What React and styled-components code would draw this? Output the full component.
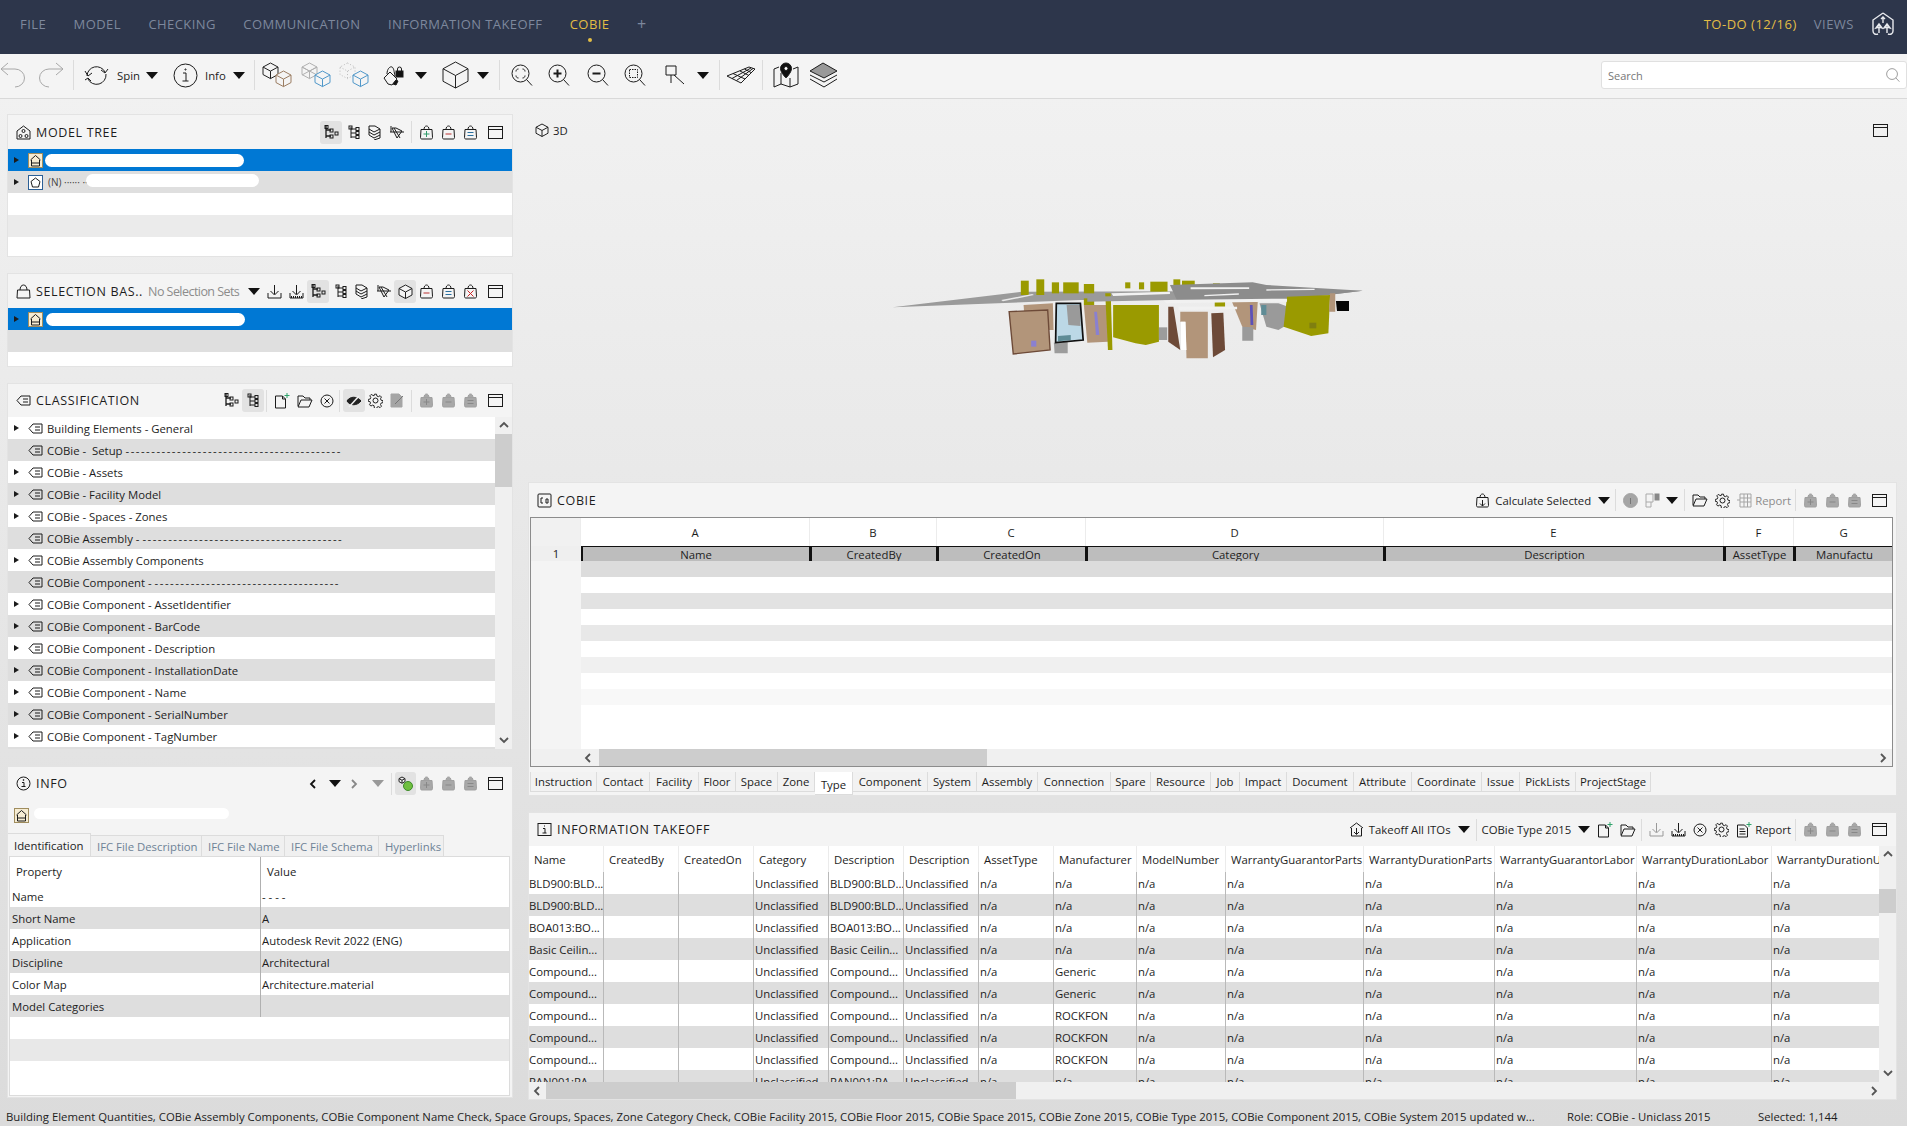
import React from "react";
import styled, { createGlobalStyle } from "styled-components";

const GlobalStyle = createGlobalStyle`
  html, body { margin: 0; padding: 0; height: 100%; }
  body { font-family: "Open Sans", "Noto Sans", sans-serif; font-size: 11.35px; color: #1d1d1d; overflow: hidden; }
  * { box-sizing: border-box; }
`;

const NAV = ["FILE", "MODEL", "CHECKING", "COMMUNICATION", "INFORMATION TAKEOFF", "COBIE"];
const CLASSES = [
  ["Building Elements - General", 1],
  ["COBie -  Setup ------------------------------------------", 0],
  ["COBie - Assets", 1],
  ["COBie - Facility Model", 1],
  ["COBie - Spaces - Zones", 1],
  ["COBie Assembly - ---------------------------------------", 0],
  ["COBie Assembly Components", 1],
  ["COBie Component - ------------------------------------", 0],
  ["COBie Component - AssetIdentifier", 1],
  ["COBie Component - BarCode", 1],
  ["COBie Component - Description", 1],
  ["COBie Component - InstallationDate", 1],
  ["COBie Component - Name", 1],
  ["COBie Component - SerialNumber", 1],
  ["COBie Component - TagNumber", 1],
  ["", 0],
];
const PROPS = [
  ["Name", ""],
  ["Short Name", "A"],
  ["Application", "Autodesk Revit 2022 (ENG)"],
  ["Discipline", "Architectural"],
  ["Color Map", "Architecture.material"],
  ["Model Categories", ""],
  ["", ""],
  ["", ""],
];
const INFO_TABS = [["Identification", 83], ["IFC File Description", 112], ["IFC File Name", 84], ["IFC File Schema", 95], ["Hyperlinks", 66]];
const SHEET_COLS = "50px 229px 127px 149px 298px 340px 70px 100px";
const SHEET = [["A", "Name"], ["B", "CreatedBy"], ["C", "CreatedOn"], ["D", "Category"], ["E", "Description"], ["F", "AssetType"], ["G", "Manufactu"]];
const SHEET_TABS = [
  ["Instruction", 67], ["Contact", 53], ["Facility", 49], ["Floor", 37], ["Space", 42], ["Zone", 37], ["Type", 38],
  ["Component", 75], ["System", 49], ["Assembly", 61], ["Connection", 73], ["Spare", 40], ["Resource", 60], ["Job", 29],
  ["Impact", 47], ["Document", 67], ["Attribute", 58], ["Coordinate", 70], ["Issue", 38], ["PickLists", 56], ["ProjectStage", 75],
];
const TAKEOFF_COLS = "75px 75px 75px 75px 75px 75px 75px 83px 89px 138px 131px 142px 135px 110px";
const TAKEOFF_HEAD = ["Name", "CreatedBy", "CreatedOn", "Category", "Description", "Description", "AssetType", "Manufacturer", "ModelNumber", "WarrantyGuarantorParts", "WarrantyDurationParts", "WarrantyGuarantorLabor", "WarrantyDurationLabor", "WarrantyDurationUnit"];
const TAKEOFF_ROWS = [
  ["BLD900:BLD...", "n/a"], ["BLD900:BLD...", "n/a"], ["BOA013:BO...", "n/a"], ["Basic Ceilin...", "n/a"],
  ["Compound...", "Generic"], ["Compound...", "Generic"], ["Compound...", "ROCKFON"], ["Compound...", "ROCKFON"], ["Compound...", "ROCKFON"], ["PAN001:PA...", "n/a"],
];

const Page = styled.div`
  width: 1907px;
  height: 1126px;
  display: flex;
  flex-direction: column;
  background: linear-gradient(#f3f3f3, #dbdbdb);
  overflow: hidden;
`;

const TopBar = styled.header`
  height: 54px;
  flex: none;
  background: #2d364b;
  display: flex;
  align-items: center;
  padding: 0 12px 6px 20px;
  font-size: 13px;
  letter-spacing: 0.5px;
`;
const NavList = styled.nav`
  display: flex;
  gap: 27.5px;
  align-items: center;
  letter-spacing: 0.42px;
`;
const NavItem = styled.span`
  position: relative;
  color: ${(p) => (p.$active ? "#e2bd45" : "#7d889d")};
  ${(p) => p.$active && `
    &::after {
      content: "";
      position: absolute;
      left: 50%;
      top: 23px;
      width: 4px;
      height: 4px;
      margin-left: -2px;
      border-radius: 50%;
      background: #e2bd45;
    }
  `}
`;
const PlusTab = styled.span`
  color: #7d889d;
  font-size: 16px;
  line-height: 1;
`;
const TopRight = styled.div`
  margin-left: auto;
  display: flex;
  align-items: center;
  gap: 17px;
  color: #7d889d;
`;
const Todo = styled.span`
  color: #e2bd45;
`;

const Toolbar = styled.div`
  height: 45px;
  flex: none;
  background: #f4f4f4;
  border-bottom: 1px solid #d9d9d9;
  display: flex;
  align-items: center;
  padding-bottom: 2px;
`;
const ToolSep = styled.i`
  width: 1px;
  height: 30px;
  background: #dcdcdc;
  margin-left: ${(p) => p.$ml || 0}px;
`;
const ToolText = styled.span`
  margin-left: ${(p) => p.$ml || 0}px;
`;
const Search = styled.div`
  margin-left: auto;
  width: 306px;
  height: 28px;
  background: #fff;
  border: 1px solid #e0e0e0;
  border-radius: 3px;
  display: flex;
  align-items: center;
  justify-content: space-between;
  padding: 0 6px 0 6px;
  color: #777;
  font-size: 11px;
`;

const Glyph = styled.svg`
  display: block;
  flex: none;
  fill: none;
  stroke: ${(p) => p.$color || "#1b1b1b"};
  stroke-width: ${(p) => p.$sw || 1};
  margin-left: ${(p) => p.$ml || 0}px;
`;
const Caret = styled.i`
  flex: none;
  width: 0;
  height: 0;
  border-left: 6px solid transparent;
  border-right: 6px solid transparent;
  border-top: 7px solid ${(p) => p.$color || "#111"};
  margin-left: ${(p) => p.$ml || 0}px;
`;

function Icon({ size = 16, h, vb, children, ...rest }) {
  return (
    <Glyph width={size} height={h || size} viewBox={vb || `0 0 ${size} ${h || size}`} {...rest}>
      {children}
    </Glyph>
  );
}

const Undo = (p) => <Icon size={26} {...p}><path d="M8 1 1 7l7 6M1 7h14a9.500 9 0 0 1 0 18" /></Icon>;
const Redo = (p) => <Icon size={26} {...p}><path d="m18 1 7 6-7 6M25 7H11a9.500 9 0 0 0 0 18" /></Icon>;
const Spin = (p) => <Icon size={25} h={20} {...p}><path d="M3 11A9.500 9.500 0 0 1 21 7M22 9a9.500 9.500 0 0 1-18 5" /><path d="m1 6 3 5 4-3M17 5l4 3 3-4M1 15l3-2 3 3" /></Icon>;
const InfoBig = (p) => <Icon size={25} {...p}><circle cx="12.500" cy="12.500" r="11.500" /><path d="M10 10h3v8M9.500 18h6" /><circle cx="12.500" cy="6.500" r=".6" /></Icon>;
const Cube = ({ x = 0, y = 0, s = 12, c = "#222" }) => (
  <g stroke={c} fill="#f4f4f4" transform={`translate(${x} ${y})`}>
    <path d={`M${s / 2} 0 ${s} ${s * 0.27}v${s * 0.5}L${s / 2} ${s * 1.04} 0 ${s * 0.77}v-${s * 0.5}Z`} />
    <path fill="none" d={`M0 ${s * 0.27}l${s / 2} ${s * 0.27} ${s / 2}-${s * 0.27}M${s / 2} ${s * 0.54}v${s / 2}`} />
  </g>
);
const Cubes1 = (p) => <Icon size={30} h={26} {...p}><Cube x={1} y={1} s={15} /><Cube x={14} y={9} s={15} c="#9b7d62" /></Icon>;
const Cubes2 = (p) => <Icon size={30} h={26} {...p}><Cube x={1} y={1} s={15} c="#b0b0b0" /><path stroke="#b0b0b0" d="m1 5 15 8M16 5 1 13" /><Cube x={14} y={9} s={15} c="#4f97c9" /></Icon>;
const Cubes3 = (p) => <Icon size={30} h={26} {...p}><g strokeDasharray="1 2"><Cube x={1} y={1} s={15} c="#bbb" /></g><Cube x={14} y={9} s={15} c="#4f97c9" /></Icon>;
const Hand = (p) => <Icon size={21} {...p}><path d="M1 13 7 7l7 7-5 6-4-1Z" /><path d="M4 9c0-5 3-8 5-7s2 5 3 9" /><path fill="#111" d="M10 19l3-4 2 1-2 4Z" /><rect x="13" y="6" width="7" height="6" fill="#111" /><path d="M14.500 6V4a2 2 0 0 1 4 0v2" /></Icon>;
const BigCube = (p) => <Icon size={28} {...p}><Cube x={1} y={1} s={25} /></Icon>;
const Zoom = ({ kind, ...p }) => (
  <Icon size={22} {...p}>
    <circle cx="9.500" cy="9.500" r="8.500" /><path d="m15.500 15.500 5.500 6" />
    {kind === "plus" && <path strokeWidth="2" d="M5.500 9.500h8M9.500 5.500v8" />}
    {kind === "minus" && <path strokeWidth="2" d="M5.500 9.500h8" />}
    {kind === "all" && <path d="M5 7.500c0-1.500 1-2.500 2.500-2.500M11.500 5C13 5 14 6 14 7.500M14 11.500c0 1.500-1 2.500-2.500 2.500M7.500 14C6 14 5 13 5 11.500" />}
    {kind === "box" && <rect x="5.500" y="5.500" width="8" height="8" strokeDasharray="1.500 1" />}
  </Icon>
);
const Section = (p) => <Icon size={20} {...p}><path d="M1 1h10v9H1ZM9 10l10 9M6 10v8" /></Icon>;
const Mesh = (p) => <Icon size={30} h={18} {...p}><path d="M1 10 23 1l6 2-14 14ZM6 12.500 25 2M10.500 14.500 27 2.500M7 7.500 19 13M14 5l9 4.500M18.500 3l6.500 3.500" /></Icon>;
const MapPin = (p) => <Icon size={26} {...p}><path d="M1 7v18l7-3 9 3 8-3V5l-5 2M1 7l5-2M8 11v11M17 16v9" /><path fill="#111" d="M13 1a5.500 5.500 0 0 1 5.500 5.500c0 4-5.500 9.500-5.500 9.500S7.500 10.500 7.500 6.500A5.500 5.500 0 0 1 13 1Z" /><circle cx="13" cy="6.500" r="2" fill="#fff" /></Icon>;
const Layers = (p) => <Icon size={29} h={26} {...p}><path fill="#999" d="M14 1 28 9 15 16 1 9Z" /><path d="m1 13 14 7 13-7M1 17l14 8 13-8" /></Icon>;

const Max = (p) => <Icon size={15} h={13} {...p}><rect x=".5" y=".5" width="14" height="12" /><path d="M.5 3.500h14" /></Icon>;
const Basket = ({ mark, tone = "#1b1b1b", dim, ...p }) => (
  <Icon size={15} {...p}>
    <path fill={dim ? "#a8a8a8" : "none"} stroke={dim ? "#a0a0a0" : "#1b1b1b"} d="M2 4.500h11l.5 8c0 1-.5 1.500-1.500 1.500H3c-1 0-1.500-.5-1.500-1.500ZM5 4.500C5 2.500 6 1 7.500 1S10 2.500 10 4.500" />
    {mark === "plus" && <path stroke={dim ? "#888" : tone} d="M4.500 9h6M7.500 6v6" />}
    {mark === "minus" && <path stroke={dim ? "#888" : tone} d="M4.500 9h6" />}
    {mark === "equal" && <path stroke={dim ? "#888" : tone} d="M4.500 7.500h6M4.500 10.500h6" />}
    {mark === "x" && <path stroke={tone} d="m4.500 6.500 6 6M10.500 6.500l-6 6" />}
    {mark === "down" && <path d="M7.500 7v6M5 10.500l2.500 2.500 2.500-2.500" />}
  </Icon>
);
const TreeA = (p) => <Icon size={15} {...p}><path strokeWidth="1.300" d="M2 1v12M2 5h5M2 11h5" /><rect x="1" y="0.500" width="3" height="3" /><rect x="6" y="4" width="3" height="3" /><rect x="6" y="10" width="3" height="3" /><rect x="11" y="7" width="3" height="3" /></Icon>;
const TreeB = (p) => <Icon size={12} h={15} {...p}><path d="M3 2v11M3 4h5M3 8h5M3 12h5" /><rect x="1" y="1" width="3" height="3" /><rect x="8" y="2.500" width="3" height="3" /><rect x="8" y="6.500" width="3" height="3" /><rect x="8" y="10.500" width="3" height="3" /></Icon>;
const TreeC = (p) => <Icon size={15} {...p}><path d="M2 1h6l5 3-6 3-5-3ZM2 4v3l5 3 6-3M2 7v3l5 3 6-3V4M13 10v3l-6 2" /></Icon>;
const TreeD = (p) => <Icon size={15} {...p}><path d="M2 1v6M1 7h14M3 3h4l6 3-5 7-3-6ZM5 3l6 10" /></Icon>;
const Download = ({ dots, ...p }) => <Icon size={15} {...p}><path d="M7.500 1v9M3.500 7l4 4 4-4M1 9v5h13V9" />{dots && <path strokeWidth="2" strokeDasharray="1 1" d="M2 13h11" />}</Icon>;
const CubeOne = (p) => <Icon size={15} {...p}><Cube x={1} y={1} s={13} /></Icon>;
const XCircle = (p) => <Icon size={14} {...p}><circle cx="7" cy="7" r="6" /><path d="m4.500 4.500 5 5M9.500 4.500l-5 5" /></Icon>;
const Gear = (p) => <Icon size={15} {...p}><path d="M6.500 1h2l.5 2 1.500.6 1.800-1 1.400 1.400-1 1.800.6 1.500 2 .5v2l-2 .5-.6 1.500 1 1.800-1.400 1.400-1.800-1-1.500.6-.5 2h-2L6 13l-1.500-.6-1.800 1-1.400-1.400 1-1.800L1.700 8.700l-1.700-.2v-2l2-.5.6-1.500-1-1.800 1.400-1.400 1.800 1L6 2.700Z" transform="translate(.3 .2) scale(.96)" /><circle cx="7.500" cy="7.500" r="2.500" /></Icon>;
const NewDoc = (p) => <Icon size={16} {...p}><path d="M1.500 3h7l3 3v9h-10ZM8.500 3v3h3" /><path stroke="#2fa36b" d="M13 0v5M10.500 2.500h5" /></Icon>;
const DocLines = (p) => <Icon size={16} {...p}><path d="M1.500 3h7l3 3v9h-10ZM3.500 7h5M3.500 9.500h6M3.500 12h6" /><path stroke="#2fa36b" d="M13 0v5M10.500 2.500h5" /></Icon>;
const Folder = (p) => <Icon size={16} h={14} {...p}><path d="M1 12V2h5l2 2h5v2M1 13l3-7h11l-3 7Z" /></Icon>;
const Eye = (p) => <Icon size={16} {...p}><path fill="#222" d="M1 8c3-5 10-5 14 0-4 5-11 5-14 0Z" /><path stroke="#f0f0f0" d="m3 14 10-11" strokeWidth="1.500" /></Icon>;
const GreyDoc = (p) => <Icon size={15} {...p}><path fill="#a5a5a5" stroke="#a5a5a5" d="M1 1h8l3 3v10H1Z" /><path stroke="#777" d="m5 11 8-8" /></Icon>;
const Tag = (p) => <Icon size={15} h={11} {...p}><path d="M1 5.500 5 1h9v9H5ZM7 4h5M7 7h5" /></Icon>;
const House = (p) => <Icon size={13} {...p}><path d="M1.500 6 6.500 1.500l5 4.500M2.500 6v6h8V6M2.500 9h8" /></Icon>;
const Chev = ({ dir, tone = "#555", ...p }) => {
  const d = { left: "M6 1 2 5l4 4", right: "M2 1l4 4-4 4", up: "M1 6l4-4 4 4", down: "M1 3l4 4 4-4" }[dir];
  return <Icon size={10} {...p}><path d={d} strokeWidth="1.800" stroke={tone} /></Icon>;
};

const Main = styled.main`
  flex: 1;
  min-height: 0;
  display: grid;
  grid-template-columns: 506px 1369px;
  grid-template-rows: auto 1fr;
  column-gap: 15px;
  padding: 15px 0 0 7px;
`;
const Column = styled.div`
  display: flex;
  flex-direction: column;
  gap: 16px;
`;
const Panel = styled.section`
  height: ${(p) => p.$h}px;
  background: #f4f4f4;
  border: 1px solid #e3e3e3;
  display: flex;
  flex-direction: column;
  overflow: hidden;
  flex: none;
`;
const PanelHead = styled.div`
  height: ${(p) => p.$h || 34}px;
  flex: none;
  display: flex;
  align-items: center;
  gap: 5px;
  padding: 0 9px 0 8px;
  font-size: 12.5px;
`;
const Title = styled.span`
  letter-spacing: 0.65px;
  white-space: nowrap;
`;
const HeadTools = styled.div`
  margin-left: auto;
  display: flex;
  align-items: center;
  gap: 7px;
  font-size: 11.35px;
`;
const Hl = styled.span`
  display: flex;
  align-items: center;
  justify-content: center;
  width: ${(p) => p.$w || 22}px;
  height: 23px;
  margin: 0 -4px;
  background: #e2e2e2;
  border-radius: 3px;
`;
const Sep = styled.i`
  width: 1px;
  height: 22px;
  background: #dcdcdc;
  margin-left: ${(p) => p.$ml || 0}px;
`;
const Muted = styled.span`
  color: ${(p) => p.$color || "#8c8c8c"};
  white-space: nowrap;
  margin-left: ${(p) => p.$ml || 0}px;
  letter-spacing: ${(p) => p.$ls || 0}px;
`;

const Stripe = styled.div`
  height: ${(p) => p.$h || 22}px;
  flex: none;
  background: ${(p) => p.$bg || "#fff"};
  display: flex;
  align-items: center;
  position: relative;
  padding-left: ${(p) => p.$pl || 0}px;
  white-space: nowrap;
  overflow: hidden;
`;
const Arrow = styled.i`
  width: 0;
  height: 0;
  flex: none;
  border-top: 3.500px solid transparent;
  border-bottom: 3.500px solid transparent;
  border-left: 5px solid ${(p) => (p.$hide ? "transparent" : "#1b1b1b")};
  margin-right: 9px;
`;
const NodeBadge = styled.span`
  width: 15px;
  height: 15px;
  flex: none;
  display: flex;
  align-items: center;
  justify-content: center;
  background: ${(p) => p.$bg || "#f6ecd2"};
  border: 1px solid ${(p) => p.$line || "#a08d5e"};
`;
const Blot = styled.span`
  position: absolute;
  left: ${(p) => p.$x}px;
  top: ${(p) => p.$y}px;
  width: ${(p) => p.$w}px;
  height: ${(p) => p.$hh}px;
  background: #fff;
  border-radius: 7px;
`;
const Peek = styled.span`
  margin-left: ${(p) => p.$ml || 5}px;
  color: ${(p) => p.$color || "#444"};
  font-size: 10px;
`;
const Fill = styled.div`
  flex: 1;
  background: ${(p) => p.$bg || "#fff"};
`;

const ListWrap = styled.div`
  flex: 1;
  min-height: 0;
  display: flex;
`;
const ListRows = styled.div`
  flex: 1;
  display: flex;
  flex-direction: column;
  background: #fff;
  overflow: hidden;
`;
const RowLabel = styled.span`
  margin-left: 4px;
  white-space: pre;
`;
const Dashes = styled.span`
  letter-spacing: 1.5px;
`;
const VBar = styled.div`
  width: 17px;
  flex: none;
  background: #f0f0f0;
  display: flex;
  flex-direction: column;
  align-items: center;
  justify-content: space-between;
  padding: 4px 0;
  position: relative;
`;
const VThumb = styled.div`
  position: absolute;
  left: 0;
  right: 0;
  top: ${(p) => p.$top}px;
  height: ${(p) => p.$h}px;
  background: #cdcdcd;
`;

const ObjectRow = styled.div`
  height: 33px;
  flex: none;
  position: relative;
  display: flex;
  align-items: center;
  padding: 0 0 2px 6px;
`;
const TabRow = styled.div`
  height: 23px;
  flex: none;
  display: flex;
  align-items: flex-end;
`;
const InfoTab = styled.span`
  width: ${(p) => p.$w}px;
  height: ${(p) => (p.$active ? 23 : 21)}px;
  padding-left: 6px;
  border: 1px solid #dcdcdc;
  border-bottom: 0;
  border-left-width: ${(p) => (p.$first ? 0 : 1)}px;
  margin-left: ${(p) => (p.$first ? 0 : -1)}px;
  color: ${(p) => (p.$active ? "#222" : "#6d8296")};
  display: flex;
  align-items: center;
  white-space: nowrap;
  background: ${(p) => (p.$active ? "#f4f4f4" : "#f0f0f0")};
`;
const PropTable = styled.div`
  flex: 1;
  margin: 0 0 1px 1px;
  width: 501px;
  background: #fff;
  border: 1px solid #dcdcdc;
  display: flex;
  flex-direction: column;
`;
const PropGrid = styled.div`
  display: grid;
  flex: none;
  grid-template-columns: 250px 1fr;
  height: ${(p) => p.$h || 22}px;
  background: ${(p) => p.$bg || "#fff"};
  align-items: center;
`;
const PropCell = styled.span`
  padding-left: ${(p) => p.$pl || 1}px;
  height: 100%;
  display: flex;
  align-items: center;
  ${(p) => p.$line && `border-left: 1px solid #b0b0b0;`}
`;

const Viewport = styled.div`
  height: 352px;
  flex: none;
  display: flex;
  flex-direction: column;
`;
const ViewHead = styled.div`
  height: 32px;
  flex: none;
  display: flex;
  align-items: center;
  gap: 4px;
  padding: 0 9px 0 6px;
`;
const Scene = styled.svg`
  display: block;
  flex: none;
  margin: 104px 0 0 332px;
`;

const Sheet = styled.div`
  height: 250px;
  margin: 0 3px 0 1px;
  flex: none;
  border: 1px solid #8c8c8c;
  background: #fff;
  display: flex;
  flex-direction: column;
  overflow: hidden;
`;
const SheetRow = styled.div`
  display: grid;
  grid-template-columns: ${SHEET_COLS};
  flex: none;
  height: ${(p) => p.$h}px;
  margin-right: -4px;
`;
const LetterCell = styled.div`
  display: flex;
  align-items: center;
  justify-content: center;
  padding-top: 1px;
  background: ${(p) => (p.$corner ? "#f1f1f1" : "#fff")};
  border-right: 1px solid #ececec;
`;
const NameCell = styled.div`
  display: flex;
  align-items: center;
  justify-content: center;
  background: #bdbdbd;
  border: 1px solid #111;
  border-left-width: 2px;
  overflow: hidden;
  white-space: nowrap;
`;
const RowNum = styled.div`
  display: flex;
  align-items: center;
  justify-content: center;
  background: #efefef;
  border-bottom: 2px solid #9a9a9a;
`;
const SheetBody = styled.div`
  flex: 1;
  display: flex;
  min-height: 0;
`;
const Gutter = styled.div`
  width: 50px;
  flex: none;
  background: #f4f4f4;
`;
const HBar = styled.div`
  height: 17px;
  flex: none;
  background: #f0f0f0;
  display: flex;
  align-items: center;
  padding-left: ${(p) => p.$pl || 0}px;
  position: relative;
`;
const HThumb = styled.div`
  height: 100%;
  width: ${(p) => p.$w}px;
  margin-left: ${(p) => p.$ml}px;
  background: #cdcdcd;
`;
const BarEnd = styled.span`
  margin-left: auto;
  margin-right: ${(p) => p.$mr || 3}px;
`;
const SheetTabs = styled.div`
  display: flex;
  height: 24px;
  margin: 5px 0 0 1px;
  flex: none;
  align-items: flex-start;
`;
const SheetTab = styled.span`
  width: ${(p) => p.$w}px;
  height: ${(p) => (p.$active ? 23 : 20)}px;
  padding-top: ${(p) => (p.$active ? 3 : 0)}px;
  display: flex;
  align-items: center;
  justify-content: center;
  background: ${(p) => (p.$active ? "#fff" : "#f2f2f2")};
  border-right: 1px solid #dcdcdc;
  border-bottom: 1px solid #dcdcdc;
  white-space: nowrap;
  flex: none;
  &:first-child { border-left: 1px solid #dcdcdc; }
`;

const TakeoffWrap = styled.div`
  height: 236px;
  flex: none;
  display: flex;
  overflow: hidden;
`;
const TakeoffBody = styled.div`
  flex: 1;
  min-width: 0;
  overflow: hidden;
`;
const TakeoffRow = styled.div`
  display: grid;
  grid-template-columns: ${TAKEOFF_COLS};
  height: ${(p) => p.$h || 22}px;
  background: ${(p) => p.$bg || "#fff"};
`;
const HeadCell = styled.div`
  display: flex;
  align-items: center;
  padding-left: 5px;
  border-right: 1px solid #ebebeb;
  white-space: nowrap;
  overflow: hidden;
`;
const DataCell = styled.div`
  display: flex;
  align-items: center;
  padding-left: ${(p) => (p.$first ? 0 : 1)}px;
  border-right: 1px solid #b9b9b9;
  white-space: nowrap;
  overflow: hidden;
`;

const StatusBar = styled.footer`
  grid-column: 1 / -1;
  display: flex;
  align-items: flex-start;
  padding: 9px 0 0 0;
  margin-left: -1px;
  white-space: nowrap;
`;
const StatusMsg = styled.span`
  width: 1561px;
`;
const StatusRole = styled.span`
  width: 191px;
`;

function Scene3D() {
  const solids = [
    ["#9a9a9a", "95,172 470,125 1460,122 1240,150 640,150 400,160"],
    ["#9a9a00", "467,92 490,92 490,135 467,135"], ["#9a9a00", "512,88 535,88 535,135 512,135"], ["#9a9a00", "557,97 578,97 578,130 557,130"],
    ["#9a9a00", "590,97 635,97 635,130 590,130"], ["#9a9a00", "650,102 680,102 680,130 650,130"], ["#9a9a00", "770,97 785,97 785,115 770,115"],
    ["#9a9a00", "810,97 825,97 825,118 810,118"], ["#9a9a00", "843,95 893,95 893,125 843,125"], ["#9a9a00", "910,88 930,88 930,110 910,110"],
    ["#9a9a00", "935,92 972,92 972,112 935,112"], ["#9a9a00", "1025,100 1045,100 1045,130 1025,130"],
    ["#8c8c8c", "900,105 1140,97 1180,105 1460,122 1240,150 920,150"],
    ["#9a9a00", "650,145 680,145 680,165 650,165"], ["#9a9a00", "1030,152 1060,152 1060,170 1030,170"],
    ["#b2957a", "475,165 560,160 562,240 480,240"],
    ["#b2957a", "433,185 545,180 552,300 445,312"],
    ["#bcd8e6", "570,160 640,160 648,270 568,278"],
    ["#9a9a9a", "600,165 640,165 640,228 605,225"],
    ["#5f8c96", "575,258 612,255 612,270 575,274"],
    ["#9c9c9c", "563,278 603,275 603,310 565,310"],
    ["#b2957a", "650,165 720,165 720,275 660,278"],
    ["#8a80d0", "680,185 688,185 695,255 685,255"],
    ["#9a9a00", "735,165 868,165 868,275 830,285 800,280 735,262"],
    ["#9a9a00", "712,130 728,130 733,300 720,300"],
    ["#9c9c9c", "868,232 892,232 892,270 868,270"],
    ["#6d4a38", "895,170 910,170 930,300 895,275"],
    ["#b2957a", "930,185 1010,185 1010,325 948,325 945,215 930,215"],
    ["#fff", "932,215 945,215 948,300 932,300"],
    ["#6d4a38", "1020,190 1055,188 1060,300 1025,322"],
    ["#b2957a", "1080,155 1155,155 1150,240 1110,230"],
    ["#5c50b8", "1132,165 1140,165 1142,225 1134,225"],
    ["#9a9a9a", "1110,230 1142,232 1142,272 1110,272"],
    ["#9a9a9a", "1160,160 1215,160 1255,175 1255,215 1215,240 1180,230"],
    ["#5f8c96", "1165,165 1180,165 1180,195 1165,195"],
    ["#9a9a00", "1240,140 1365,135 1360,250 1310,258 1230,230"],
    ["#7f7f10", "1305,218 1325,218 1325,235 1305,235"],
    ["#b2957a", "1365,130 1380,130 1380,185 1362,185"],
    ["#050505", "1382,153 1420,153 1420,183 1385,183"],
    ["#e9e9e9", "410,150 500,132 505,135 415,154"],
    ["#f1f1f1", "880,150 1240,146 1240,155 890,160"],
    ["#f1f1f1", "730,130 900,125 900,132 735,138"],
    ["#f1f1f1", "925,170 1095,170 1095,178 925,180"],
    ["#f1f1f1", "960,112 1130,112 1130,117 960,118"],
    ["#f1f1f1", "1180,118 1320,116 1320,120 1180,122"],
    ["#f1f1f1", "1000,135 1100,130 1100,134 1000,139"],
    ["#9a9a9a", "660,140 900,135 900,150 660,155"],
  ];
  return (
    <Scene width="540" height="130" viewBox="0 0 1568 390" preserveAspectRatio="none">
      {solids.map(([c, pts], i) => <polygon key={i} fill={c} points={pts} />)}
      <polygon fill="none" stroke="#111" strokeWidth="5" points="570,160 640,160 648,270 568,278" />
      <polygon fill="none" stroke="#6d4a38" strokeWidth="4" points="433,185 545,180 552,300 445,312" />
      <polygon fill="#8a80d0" points="497,272 512,272 512,290 497,290" />
    </Scene>
  );
}

function CobieSheet() {
  const bands = ["#dcdcdc", "#fff", "#e2e2e2", "#fff", "#e8e8e8", "#fff", "#f0f0f0", "#fff", "#f8f8f8"];
  return (
    <Sheet>
      <SheetRow $h={28}>
        <LetterCell $corner />
        {SHEET.map(([l]) => <LetterCell key={l}>{l}</LetterCell>)}
      </SheetRow>
      <SheetRow $h={15}>
        <RowNum>1</RowNum>
        {SHEET.map(([l, n]) => <NameCell key={l}>{n}</NameCell>)}
      </SheetRow>
      <SheetBody>
        <Gutter />
        <ListRows>
          {bands.map((c, i) => <Stripe key={i} $h={16} $bg={c} />)}
        </ListRows>
      </SheetBody>
      <HBar $pl={53}>
        <Chev dir="left" />
        <HThumb $ml={5} $w={388} />
        <BarEnd><Chev dir="right" /></BarEnd>
      </HBar>
    </Sheet>
  );
}

function TreeList({ rows }) {
  return rows.map(([label, exp], i) => {
    const parts = label.match(/^(.*?)(-{5,})$/);
    return (
      <Stripe key={i} $bg={i % 2 ? "#dedede" : "#fff"} $pl={6}>
        <Arrow $hide={!exp} />
        <Tag />
        <RowLabel>
          {parts ? <>{parts[1]}<Dashes>{parts[2]}</Dashes></> : label}
        </RowLabel>
      </Stripe>
    );
  });
}

function PanelBaskets({ dim }) {
  return (
    <>
      <Basket mark="plus" tone="#2f9b6b" dim={dim} />
      <Basket mark="minus" tone="#b33" dim={dim} />
      <Basket mark="equal" tone="#2a6f9e" dim={dim} />
      <Max $ml={3} />
    </>
  );
}

export default function App() {
  return (
    <Page>
      <GlobalStyle />
      <TopBar>
        <NavList>
          {NAV.map((n) => <NavItem key={n} $active={n === "COBIE"}>{n}</NavItem>)}
          <PlusTab>+</PlusTab>
        </NavList>
        <TopRight>
          <Todo>TO-DO (12/16)</Todo>
          <span>VIEWS</span>
          <Icon size={24} $color="#e8eaee" $sw={1.4}>
            <path d="M12 1 22 8v11c0 3-3 4-5 3M12 1 2 8v11c0 3 3 4 5 3" />
            <path d="M8 21v-6l-3 1 3-4 3 4-3-1M16 21v-6l-3 1 3-4 3 4-3-1M12 5v6M10 7l2-2 2 2" />
          </Icon>
        </TopRight>
      </TopBar>

      <Toolbar>
        <Undo $color="#a8a8a8" />
        <Redo $color="#a8a8a8" $ml={12} />
        <ToolSep $ml={9} />
        <Spin $ml={10} />
        <ToolText $ml={8}>Spin</ToolText>
        <Caret $ml={6} />
        <InfoBig $ml={15} />
        <ToolText $ml={7}>Info</ToolText>
        <Caret $ml={7} />
        <ToolSep $ml={9} />
        <Cubes1 $ml={7} />
        <Cubes2 $ml={9} />
        <Cubes3 $ml={8} />
        <Hand $ml={14} />
        <Caret $ml={11} />
        <BigCube $ml={15} />
        <Caret $ml={7} />
        <ToolSep $ml={10} />
        <Zoom kind="all" $ml={11} />
        <Zoom kind="plus" $ml={15} />
        <Zoom kind="minus" $ml={17} />
        <Zoom kind="box" $ml={15} />
        <Section $ml={19} />
        <Caret $ml={12} />
        <ToolSep $ml={10} />
        <Mesh $ml={6} />
        <ToolSep $ml={6} />
        <MapPin $ml={10} />
        <Layers $ml={10} />
        <Search>
          Search
          <Zoom kind="none" size={14} vb="0 0 22 22" $color="#666" />
        </Search>
      </Toolbar>

      <Main>
        <Column>
          <Panel $h={143}>
            <PanelHead>
              <Icon size={15}><path d="M7.500 1 14 6v8H1V6Z" /><circle cx="7.500" cy="6" r="1.500" /><circle cx="4.500" cy="11" r="1.500" /><circle cx="10.500" cy="11" r="1.500" /></Icon>
              <Title>MODEL TREE</Title>
              <HeadTools>
                <Hl><TreeA /></Hl>
                <TreeB $ml={3} />
                <TreeC />
                <TreeD />
                <Sep />
                <PanelBaskets />
              </HeadTools>
            </PanelHead>
            <Stripe $bg="#0078d4" $pl={6}>
              <Arrow />
              <NodeBadge><House /></NodeBadge>
              <Peek $color="#fff">(N) ··</Peek>
              <Blot $x={37} $y={5} $w={199} $hh={13} />
            </Stripe>
            <Stripe $bg="#dfdfdf" $pl={6}>
              <Arrow />
              <NodeBadge $bg="#fff" $line="#2b5f96"><Icon size={11}><path d="M5.500 1 10 4.500 8.500 10h-6L1 4.500Z" /></Icon></NodeBadge>
              <Peek>(N) ······ ·····</Peek>
              <Blot $x={78} $y={3} $w={173} $hh={13} />
            </Stripe>
            <Stripe />
            <Stripe $bg="#ebebeb" />
            <Fill />
          </Panel>

          <Panel $h={94}>
            <PanelHead>
              <Icon size={15}><path d="M1.500 6h12l.5 8H1ZM4 6c0-3 1.500-5 3.500-5S11 3 11 6" /></Icon>
              <Title>SELECTION BAS..</Title>
              <Muted $ls={-0.55}>No Selection Sets</Muted>
              <HeadTools>
                <Caret />
                <Download />
                <Download dots />
                <Hl><TreeA /></Hl>
                <TreeB $ml={3} />
                <TreeC />
                <TreeD />
                <Hl><CubeOne /></Hl>
                <Basket mark="minus" tone="#b33" />
                <Basket mark="equal" tone="#2a6f9e" />
                <Basket mark="x" tone="#c22" />
                <Max $ml={3} />
              </HeadTools>
            </PanelHead>
            <Stripe $bg="#0078d4" $pl={6}>
              <Arrow />
              <NodeBadge><House /></NodeBadge>
              <Peek $color="#fff">(N) ··</Peek>
              <Blot $x={38} $y={5} $w={199} $hh={13} />
            </Stripe>
            <Stripe $bg="#dfdfdf" />
            <Fill />
          </Panel>

          <Panel $h={367}>
            <PanelHead $h={33}>
              <Tag />
              <Title>CLASSIFICATION</Title>
              <HeadTools>
                <TreeA />
                <Hl><TreeB /></Hl>
                <Sep $ml={-1} />
                <NewDoc />
                <Folder />
                <XCircle />
                <Sep $ml={-2} />
                <Hl><Eye /></Hl>
                <Gear />
                <GreyDoc />
                <Sep $ml={-1} />
                <PanelBaskets dim />
              </HeadTools>
            </PanelHead>
            <ListWrap>
              <ListRows><TreeList rows={CLASSES} /></ListRows>
              <VBar>
                <Chev dir="up" />
                <VThumb $top={17} $h={53} />
                <Chev dir="down" />
              </VBar>
            </ListWrap>
          </Panel>

          <Panel $h={332}>
            <PanelHead $h={33}>
              <Icon size={15}><circle cx="7.500" cy="7.500" r="6.500" /><path d="M6 6.500h2v4M5.500 10.500h4" /><circle cx="7.500" cy="4" r=".5" /></Icon>
              <Title>INFO</Title>
              <HeadTools>
                <Chev dir="left" tone="#111" />
                <Caret $ml={3} />
                <Chev dir="right" tone="#888" $ml={2} />
                <Caret $color="#999" $ml={5} />
                <Sep />
                <Hl $w={21}>
                  <Icon size={15}><Cube x={1} y={1} s={6} /><circle cx="10" cy="10" r="4.500" fill="#6fbf3f" stroke="#3d8a2a" /></Icon>
                </Hl>
                <PanelBaskets dim />
              </HeadTools>
            </PanelHead>
            <ObjectRow>
              <NodeBadge><House /></NodeBadge>
              <Peek $ml={125}>- - - - - - - - -</Peek>
              <Blot $x={26} $y={8} $w={195} $hh={11} />
            </ObjectRow>
            <TabRow>
              {INFO_TABS.map(([t, w], i) => <InfoTab key={t} $w={w} $active={i === 0} $first={i === 0}>{t}</InfoTab>)}
            </TabRow>
            <PropTable>
              <PropGrid $h={28}>
                <PropCell $pl={6}>Property</PropCell>
                <PropCell $pl={6} $line>Value</PropCell>
              </PropGrid>
              {PROPS.map(([k, v], i) => (
                <PropGrid key={i} $bg={i % 2 ? (i > 5 ? "#e8e8e8" : "#dedede") : "#fff"}>
                  <PropCell $pl={2}>{k}</PropCell>
                  <PropCell $pl={1} $line={i < 6}>{i === 0 ? "- - - -" : v}</PropCell>
                </PropGrid>
              ))}
            </PropTable>
          </Panel>
        </Column>

        <Column>
          <Viewport>
            <ViewHead>
              <Icon size={15}><Cube x={2} y={1} s={12} /></Icon>
              3D
              <HeadTools><Max /></HeadTools>
            </ViewHead>
            <Scene3D />
          </Viewport>

          <Panel $h={314}>
            <PanelHead>
              <Icon size={15}><rect x="1" y="1" width="13" height="13" rx="1" /><path d="M6 5H4v5h2M9 6h2v4H9Z" /></Icon>
              <Title>COBIE</Title>
              <HeadTools>
                <Basket mark="down" />
                <Muted $color="#1d1d1d" $ml={-2}>Calculate Selected</Muted>
                <Caret />
                <Sep $ml={-2} />
                <Icon size={15}><circle cx="7.500" cy="7.500" r="7" fill="#a5a5a5" stroke="#a5a5a5" /><path stroke="#777" d="M7.500 5v6" /></Icon>
                <Icon size={15}><path stroke="#aaa" d="M1 1h7v8H1ZM1 9v5h5V9" /><rect x="10" y="1" width="4" height="6" fill="#888" stroke="#888" /></Icon>
                <Caret $ml={-1} />
                <Sep $ml={-1} />
                <Folder />
                <Gear />
                <Icon size={15} $color="#a5a5a5"><path d="M3 1h11v13H3ZM3 5h11M3 9h11M7 1v13M10.500 1v13M0 7h3" /></Icon>
                <Muted $ml={-4}>Report</Muted>
                <Sep $ml={-3} />
                <PanelBaskets dim />
              </HeadTools>
            </PanelHead>
            <CobieSheet />
            <SheetTabs>
              {SHEET_TABS.map(([t, w]) => <SheetTab key={t} $w={w} $active={t === "Type"}>{t}</SheetTab>)}
            </SheetTabs>
          </Panel>

          <Panel $h={288}>
            <PanelHead $h={33}>
              <Icon size={15}><rect x="1" y="1.500" width="13" height="12" /><path d="M6 6.500h2v4.500M5.500 11h4M7.500 3.500v1" /></Icon>
              <Title>INFORMATION TAKEOFF</Title>
              <HeadTools>
                <Icon size={15}><path d="M7.500 1 14 6M7.500 1 1 6M2.500 6v8h10V6M7.500 6v6M5 10l2.500 2.500L10 10" /></Icon>
                <Muted $color="#1d1d1d" $ml={-2}>Takeoff All ITOs</Muted>
                <Caret />
                <Sep $ml={-1} />
                <Muted $color="#1d1d1d" $ml={-2}>COBie Type 2015</Muted>
                <Caret />
                <NewDoc />
                <Folder />
                <Sep $ml={-2} />
                <Download $color="#999" />
                <Download dots />
                <XCircle />
                <Gear />
                <DocLines />
                <Muted $color="#1d1d1d" $ml={-4}>Report</Muted>
                <Sep $ml={-3} />
                <PanelBaskets dim />
              </HeadTools>
            </PanelHead>
            <TakeoffWrap>
              <TakeoffBody>
                <TakeoffRow $h={26}>
                  {TAKEOFF_HEAD.map((h, i) => <HeadCell key={i}>{h}</HeadCell>)}
                </TakeoffRow>
                {TAKEOFF_ROWS.map(([name, maker], r) => (
                  <TakeoffRow key={r} $bg={r % 2 ? "#dedede" : "#fff"}>
                    <DataCell $first>{name}</DataCell>
                    <DataCell />
                    <DataCell />
                    <DataCell>Unclassified</DataCell>
                    <DataCell>{name}</DataCell>
                    <DataCell>Unclassified</DataCell>
                    <DataCell>n/a</DataCell>
                    <DataCell>{maker}</DataCell>
                    {[0, 1, 2, 3, 4, 5].map((c) => <DataCell key={c}>n/a</DataCell>)}
                  </TakeoffRow>
                ))}
              </TakeoffBody>
              <VBar>
                <Chev dir="up" />
                <VThumb $top={43} $h={24} />
                <Chev dir="down" />
              </VBar>
            </TakeoffWrap>
            <HBar $pl={4}>
              <Chev dir="left" />
              <HThumb $ml={3} $w={470} />
              <BarEnd $mr={16}><Chev dir="right" /></BarEnd>
            </HBar>
          </Panel>
        </Column>

        <StatusBar>
          <StatusMsg>Building Element Quantities, COBie Assembly Components, COBie Component Name Check, Space Groups, Spaces, Zone Category Check, COBie Facility 2015, COBie Floor 2015, COBie Space 2015, COBie Zone 2015, COBie Type 2015, COBie Component 2015, COBie System 2015 updated w...</StatusMsg>
          <StatusRole>Role: COBie - Uniclass 2015</StatusRole>
          <span>Selected: 1,144</span>
        </StatusBar>
      </Main>
    </Page>
  );
}
